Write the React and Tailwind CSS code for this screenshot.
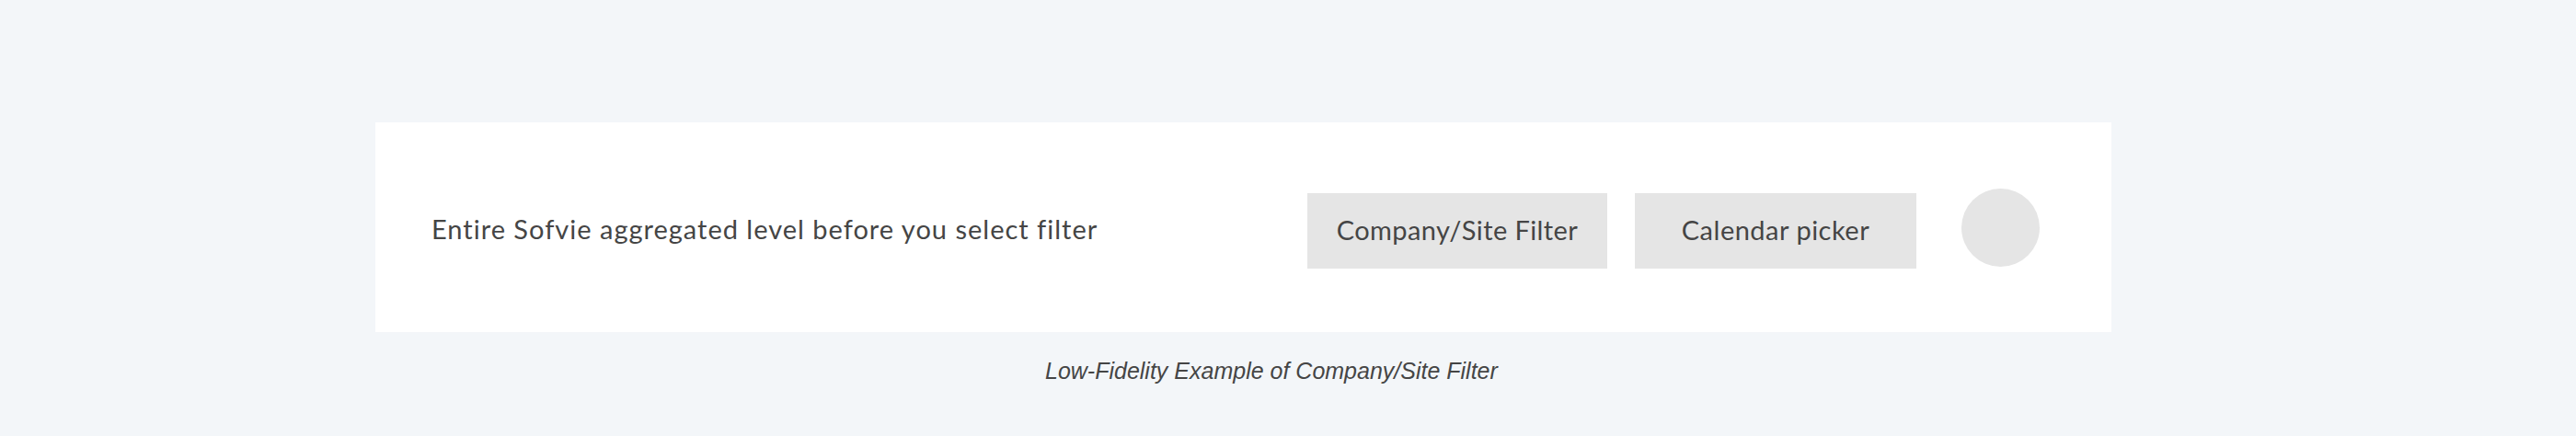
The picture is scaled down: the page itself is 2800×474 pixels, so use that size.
import React from 'react';

const App = () => {
    return (
        <div className="h-[474px] w-[2800px] overflow-hidden bg-[#f3f6f9] pt-[133px]">
            <div className="ml-[408px] flex h-[228px] w-[1887px] items-center bg-white pl-[61px] pr-[78px]" style={{ fontFamily: 'Lato, "Open Sans", sans-serif' }}>
                <p className="mt-[2px] flex-1 text-[29px] leading-none tracking-[1px] text-[#454545]">
                    Entire Sofvie aggregated level before you select filter
                </p>
                <div className="mt-[8px] flex gap-[30px]">
                    <div className="flex h-[82px] w-[326px] items-center justify-center bg-[#e5e5e5] pb-[3px] text-[29px] tracking-[0.4px] text-[#454545]">
                        Company/Site Filter
                    </div>
                    <div className="flex h-[82px] w-[306px] items-center justify-center bg-[#e5e5e5] pb-[3px] text-[29px] tracking-[0.5px] text-[#454545]">
                        Calendar picker
                    </div>
                </div>
                <div className="ml-[49px] h-[85px] w-[85px] rounded-full bg-[#e5e5e5]"></div>
            </div>
            <p className="ml-[1136px] mt-[30px] text-[25px] italic leading-none text-[#454545]" style={{ fontFamily: '"Liberation Sans", Arial, sans-serif' }}>
                Low-Fidelity Example of Company/Site Filter
            </p>
        </div>
    );
};

export default App;
